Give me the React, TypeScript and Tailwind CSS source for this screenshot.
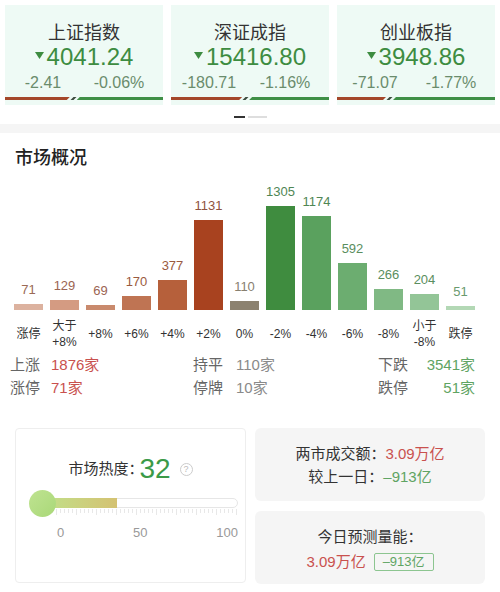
import React from 'react'

const FONT = { fontFamily: '"Liberation Sans", "Noto Sans CJK SC", sans-serif' }

const indices = [
  { name: '上证指数', value: '4041.24', change: '-2.41', pct: '-0.06%', up: 41 },
  { name: '深证成指', value: '15416.80', change: '-180.71', pct: '-1.16%', up: 45 },
  { name: '创业板指', value: '3948.86', change: '-71.07', pct: '-1.77%', up: 31 },
]

const dist = [
  { label: '涨停', n: 71, bar: '#dcb29f', text: '#9b6a55' },
  { label: '大于\n+8%', n: 129, bar: '#d49b82', text: '#9b6452' },
  { label: '+8%', n: 69, bar: '#c98a6d', text: '#9b6452' },
  { label: '+6%', n: 170, bar: '#bf7453', text: '#9a5a40' },
  { label: '+4%', n: 377, bar: '#b6603b', text: '#9a5a40' },
  { label: '+2%', n: 1131, bar: '#a8421f', text: '#8f5240' },
  { label: '0%', n: 110, bar: '#8c8270', text: '#888070' },
  { label: '-2%', n: 1305, bar: '#3f8c3f', text: '#4f8654' },
  { label: '-4%', n: 1174, bar: '#5aa15e', text: '#4f8654' },
  { label: '-6%', n: 592, bar: '#6cad70', text: '#5a8e5e' },
  { label: '-8%', n: 266, bar: '#80b984', text: '#5a8e5e' },
  { label: '小于\n-8%', n: 204, bar: '#93c597', text: '#5a8e5e' },
  { label: '跌停', n: 51, bar: '#b3d8b5', text: '#6a9a6e' },
]

function DownArrow() {
  return (
    <svg width="9" height="7" viewBox="0 0 9 7" className="mr-[3px] mb-[4px]">
      <path d="M0 0 L9 0 L4.5 7 Z" fill="#3d8c41" />
    </svg>
  )
}

function IndexCard({ item }: { item: (typeof indices)[number] }) {
  return (
    <div className="w-[158px] h-[100px] bg-[#eefaf5] flex flex-col items-center pt-[17px]">
      <div className="text-[18px] leading-[22px] text-[#333]" style={FONT}>{item.name}</div>
      <div className="flex items-center text-[24px] leading-[26px] text-[#3d8c41]" style={FONT}>
        <DownArrow />
        {item.value}
      </div>
      <div className="w-full grid grid-cols-2 pr-[6px] mt-[4px] text-[16px] leading-[18px] text-[#6a8c6c] text-center" style={FONT}>
        <span>{item.change}</span>
        <span>{item.pct}</span>
      </div>
      {/* up/down split bar */}
      <div className="w-full flex items-center h-[3px] mt-[5px]">
        <div
          className="h-full bg-[#a4472a] [clip-path:polygon(0_0,100%_0,calc(100%_-_3px)_100%,0_100%)]"
          style={{ width: `${item.up}%` }}
        />
        <div className="w-[3px] h-full bg-[#3c4a3e] -skew-x-[45deg] mx-[2px]" />
        <div className="flex-1 h-full bg-[#3f8f46] [clip-path:polygon(3px_0,100%_0,100%_100%,0_100%)]" />
      </div>
    </div>
  )
}

function Ticks() {
  const lines = []
  for (let i = 0; i <= 50; i++) {
    const x = 0.5 + i * 4
    lines.push(<line key={i} x1={x} y1={0} x2={x} y2={i % 5 === 0 ? 6 : 4} stroke="#e8e8e8" strokeWidth="1" />)
  }
  return (
    <svg width="202" height="6" className="ml-[20px] mt-[1px]">
      {lines}
    </svg>
  )
}

export default function App() {
  const max = 1305
  return (
    <div className="w-[500px] h-[592px] bg-white overflow-hidden" style={FONT}>
      {/* index cards */}
      <div className="flex gap-[8px] px-[5px] pt-[5px]">
        {indices.map((it) => (
          <IndexCard key={it.name} item={it} />
        ))}
      </div>
      <div className="flex justify-center gap-[3px] mt-[11px] h-[3px]">
        <div className="w-[11px] h-[2px] bg-[#333]" />
        <div className="w-[19px] h-[2px] bg-[#dedede]" />
      </div>
      <div className="h-[9px] bg-[#f5f5f5] mt-[5px]" />

      {/* 市场概况 */}
      <div className="px-[15px] pt-[12px] text-[18px] leading-[26px] text-[#222] font-medium" style={FONT}>
        市场概况
      </div>

      <div className="flex gap-[7px] px-[14px] h-[139px] items-end">
        {dist.map((d) => (
          <div key={d.label} className="w-[29px] flex flex-col items-center">
            <span className="text-[13px] leading-[16px] mb-[6px] whitespace-nowrap" style={{ color: d.text }}>
              {d.n}
            </span>
            <div className="w-full" style={{ height: Math.max(4, (d.n / max) * 104), background: d.bar }} />
          </div>
        ))}
      </div>
      <div className="flex gap-[7px] px-[14px] h-[38px] mt-[5px] items-center">
        {dist.map((d) => (
          <div key={d.label} className="w-[29px] flex justify-center text-center text-[12px] leading-[16px] text-[#333] whitespace-pre">
            {d.label}
          </div>
        ))}
      </div>

      {/* rise/flat/fall counts */}
      <div className="text-[15px] leading-[23px] pl-[10px]">
        <div className="flex">
          <div className="w-[183px] flex">
            <span className="w-[41px] text-[#666]">上涨</span>
            <span className="text-[#c9514e]">1876家</span>
          </div>
          <div className="w-[185px] flex">
            <span className="w-[43px] text-[#666]">持平</span>
            <span className="text-[#8a8a8a]">110家</span>
          </div>
          <div className="w-[97px] flex justify-between">
            <span className="text-[#666]">下跌</span>
            <span className="text-[#5fa463]">3541家</span>
          </div>
        </div>
        <div className="flex">
          <div className="w-[183px] flex">
            <span className="w-[41px] text-[#666]">涨停</span>
            <span className="text-[#c9514e]">71家</span>
          </div>
          <div className="w-[185px] flex">
            <span className="w-[43px] text-[#666]">停牌</span>
            <span className="text-[#8a8a8a]">10家</span>
          </div>
          <div className="w-[97px] flex justify-between">
            <span className="text-[#666]">跌停</span>
            <span className="text-[#5fa463]">51家</span>
          </div>
        </div>
      </div>

      {/* heat + turnover */}
      <div className="flex gap-[9px] px-[15px] mt-[29px]">
        <div className="w-[231px] h-[155px] border border-[#eeeeee] rounded-[4px] flex flex-col">
          <div className="flex items-center justify-center h-[34px] mt-[23px]">
            <span className="text-[15px] text-[#333]">市场热度：</span>
            <span className="text-[28px] leading-[30px] text-[#3b9a48] ml-[-4px]">32</span>
            <span className="ml-[9px] w-[13px] h-[13px] rounded-full border border-[#cccccc] text-[#bbbbbb] text-[9px] leading-[11px] flex items-center justify-center">
              ?
            </span>
          </div>
          {/* slider */}
          <div className="relative ml-[14px] mt-[12px] w-[208px] h-[10px] rounded-full border border-[#e6e6e6] bg-white">
            <div className="absolute left-[10px] top-[-1px] w-[76px] h-[10px] bg-gradient-to-r from-[#bfe18b] to-[#d4c272]" />
            <div className="absolute left-[-2px] top-[-9px] w-[27px] h-[27px] rounded-full bg-gradient-to-br from-[#bfe391] to-[#a9d878]" />
          </div>
          <Ticks />
          <div className="ml-[41px] w-[181px] flex justify-between mt-[10px] text-[13px] leading-[16px] text-[#999]">
            <span>0</span>
            <span>50</span>
            <span>100</span>
          </div>
        </div>

        <div className="w-[230px] flex flex-col gap-[10px]">
          <div className="h-[73px] bg-[#f5f5f5] rounded-[6px] flex flex-col items-center pt-[14px] text-[15px] leading-[23px]">
            <div>
              <span className="text-[#333]">两市成交额：</span>
              <span className="text-[#c9514e]">3.09万亿</span>
            </div>
            <div>
              <span className="text-[#333]">较上一日：</span>
              <span className="text-[#5fa463]">–913亿</span>
            </div>
          </div>
          <div className="h-[73px] bg-[#f5f5f5] rounded-[6px] flex flex-col items-center pt-[14px] text-[15px] leading-[23px]">
            <div className="text-[#333]">今日预测量能：</div>
            <div className="flex items-center mt-[2px]">
              <span className="text-[#c9514e]">3.09万亿</span>
              <span className="ml-[8px] h-[18px] px-[8px] border border-[#8cc590] rounded-[2px] text-[13px] leading-[16px] text-[#5fa463]">
                –913亿
              </span>
            </div>
          </div>
        </div>
      </div>
    </div>
  )
}
